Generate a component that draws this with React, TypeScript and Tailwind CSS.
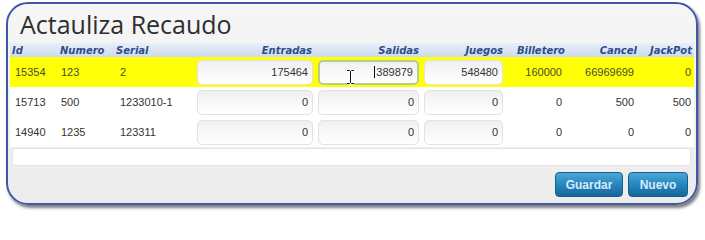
import React from "react";

type Row = {
  id: string;
  numero: string;
  serial: string;
  entradas: string;
  salidas: string;
  juegos: string;
  billetero: string;
  cancel: string;
  jackpot: string;
};

const rows: Row[] = [
  { id: "15354", numero: "123", serial: "2", entradas: "175464", salidas: "389879", juegos: "548480", billetero: "160000", cancel: "66969699", jackpot: "0" },
  { id: "15713", numero: "500", serial: "1233010-1", entradas: "0", salidas: "0", juegos: "0", billetero: "0", cancel: "500", jackpot: "500" },
  { id: "14940", numero: "1235", serial: "123311", entradas: "0", salidas: "0", juegos: "0", billetero: "0", cancel: "0", jackpot: "0" },
];

const cols = "grid grid-cols-[47px_56px_79px_123px_106px_85px_61px_72px_55px]";

function Field({ value, focused, className }: { value: string; focused?: boolean; className: string }) {
  return (
    <div
      className={
        "relative h-[25px] rounded-[5px] flex items-center justify-end pr-[4px] text-[11px] text-[#333] " +
        (focused
          ? "border-2 border-[#b5cf8a] bg-gradient-to-b from-[#f2f2f2] to-white "
          : "border border-[#e2e2e2] bg-gradient-to-b from-[#efefef] via-[#f8f8f8] to-white ") +
        className
      }
    >
      {focused && <span className="w-px h-[12px] bg-black mr-[1px]" />}
      {value}
      {focused && (
        <svg className="absolute left-[26px] top-[7px]" width="9" height="16" viewBox="0 0 9 16">
          <path d="M1 1.5h2.5l1 1 1-1H8M4.5 2.5v11M1 14.5h2.5l1-1 1 1H8" stroke="#fff" strokeWidth="2.6" fill="none" />
          <path d="M1 1.5h2.5l1 1 1-1H8M4.5 2.5v11M1 14.5h2.5l1-1 1 1H8" stroke="#111" strokeWidth="1" fill="none" />
        </svg>
      )}
    </div>
  );
}

export default function App() {
  return (
    <div className="w-[705px] h-[215px] bg-white pt-[2px] pl-[6px]" style={{ fontFamily: '"Liberation Sans", Arial, sans-serif' }}>
      <div className="w-[692px] h-[203px] rounded-[22px] border-2 border-[#3f59a8] bg-gradient-to-b from-[#f6f6f6] to-[#ececec] shadow-[2px_3px_3px_rgba(0,0,0,0.5)] overflow-hidden">
        <h1
          className="h-[39px] pt-[6px] pl-[12px] text-[25px] leading-[28px] text-[#2e2e2e]"
          style={{ fontFamily: '"Open Sans", "Noto Sans", sans-serif' }}
        >
          Actauliza Recaudo
        </h1>

        <div className="px-[2px]">
          <div
            className={cols + " h-[14px] items-center bg-gradient-to-b from-[#e9eff8] to-[#cddbee] text-[10px] font-bold italic text-[#2c4c8c]"}
            style={{ fontFamily: '"DejaVu Sans", Verdana, sans-serif' }}
          >
            <div className="pl-[2px]">Id</div>
            <div className="pl-[3px]">Numero</div>
            <div className="pl-[3px]">Serial</div>
            <div className="text-right pr-[3px]">Entradas</div>
            <div className="text-right pr-[2px]">Salidas</div>
            <div className="text-right pr-[3px]">Juegos</div>
            <div className="text-right pr-[2px]">Billetero</div>
            <div className="text-right pr-[2px]">Cancel</div>
            <div className="text-right pr-[2px] whitespace-nowrap">JackPot</div>
          </div>

          {rows.map((r, i) => (
            <div
              key={r.id}
              className={cols + " h-[30px] items-center text-[11px] " + (i === 0 ? "bg-[#ffff08] text-[#4a4a2a]" : "bg-white text-[#333]")}
            >
              <div className="pl-[5px]">{r.id}</div>
              <div className="pl-[4px]">{r.numero}</div>
              <div className="pl-[7px]">{r.serial}</div>
              <Field value={r.entradas} className="ml-[5px] mr-[2px]" />
              <Field value={r.salidas} focused={i === 0} className="ml-[3px] mr-[2px]" />
              <Field value={r.juegos} className="ml-[3px] mr-[3px]" />
              <div className="text-right pr-[5px]">{r.billetero}</div>
              <div className="text-right pr-[5px] whitespace-nowrap">{r.cancel}</div>
              <div className="text-right pr-[3px]">{r.jackpot}</div>
            </div>
          ))}

          <div className="mt-px ml-[2px] mr-[3px] h-[18px] rounded-[3px] border border-[#e4e4e4] bg-white" />
        </div>

        <div className="flex justify-end gap-[5px] pr-[8px] mt-[6px]">
          <button className="w-[68px] h-[25px] rounded-[4px] border border-[#1a5f8c] bg-gradient-to-b from-[#4ba7da] via-[#2686bd] to-[#15679a] text-[12px] font-bold text-[#d6ecfb]">
            Guardar
          </button>
          <button className="w-[60px] h-[25px] rounded-[4px] border border-[#1a5f8c] bg-gradient-to-b from-[#4ba7da] via-[#2686bd] to-[#15679a] text-[12px] font-bold text-[#d6ecfb]">
            Nuevo
          </button>
        </div>
      </div>
    </div>
  );
}
